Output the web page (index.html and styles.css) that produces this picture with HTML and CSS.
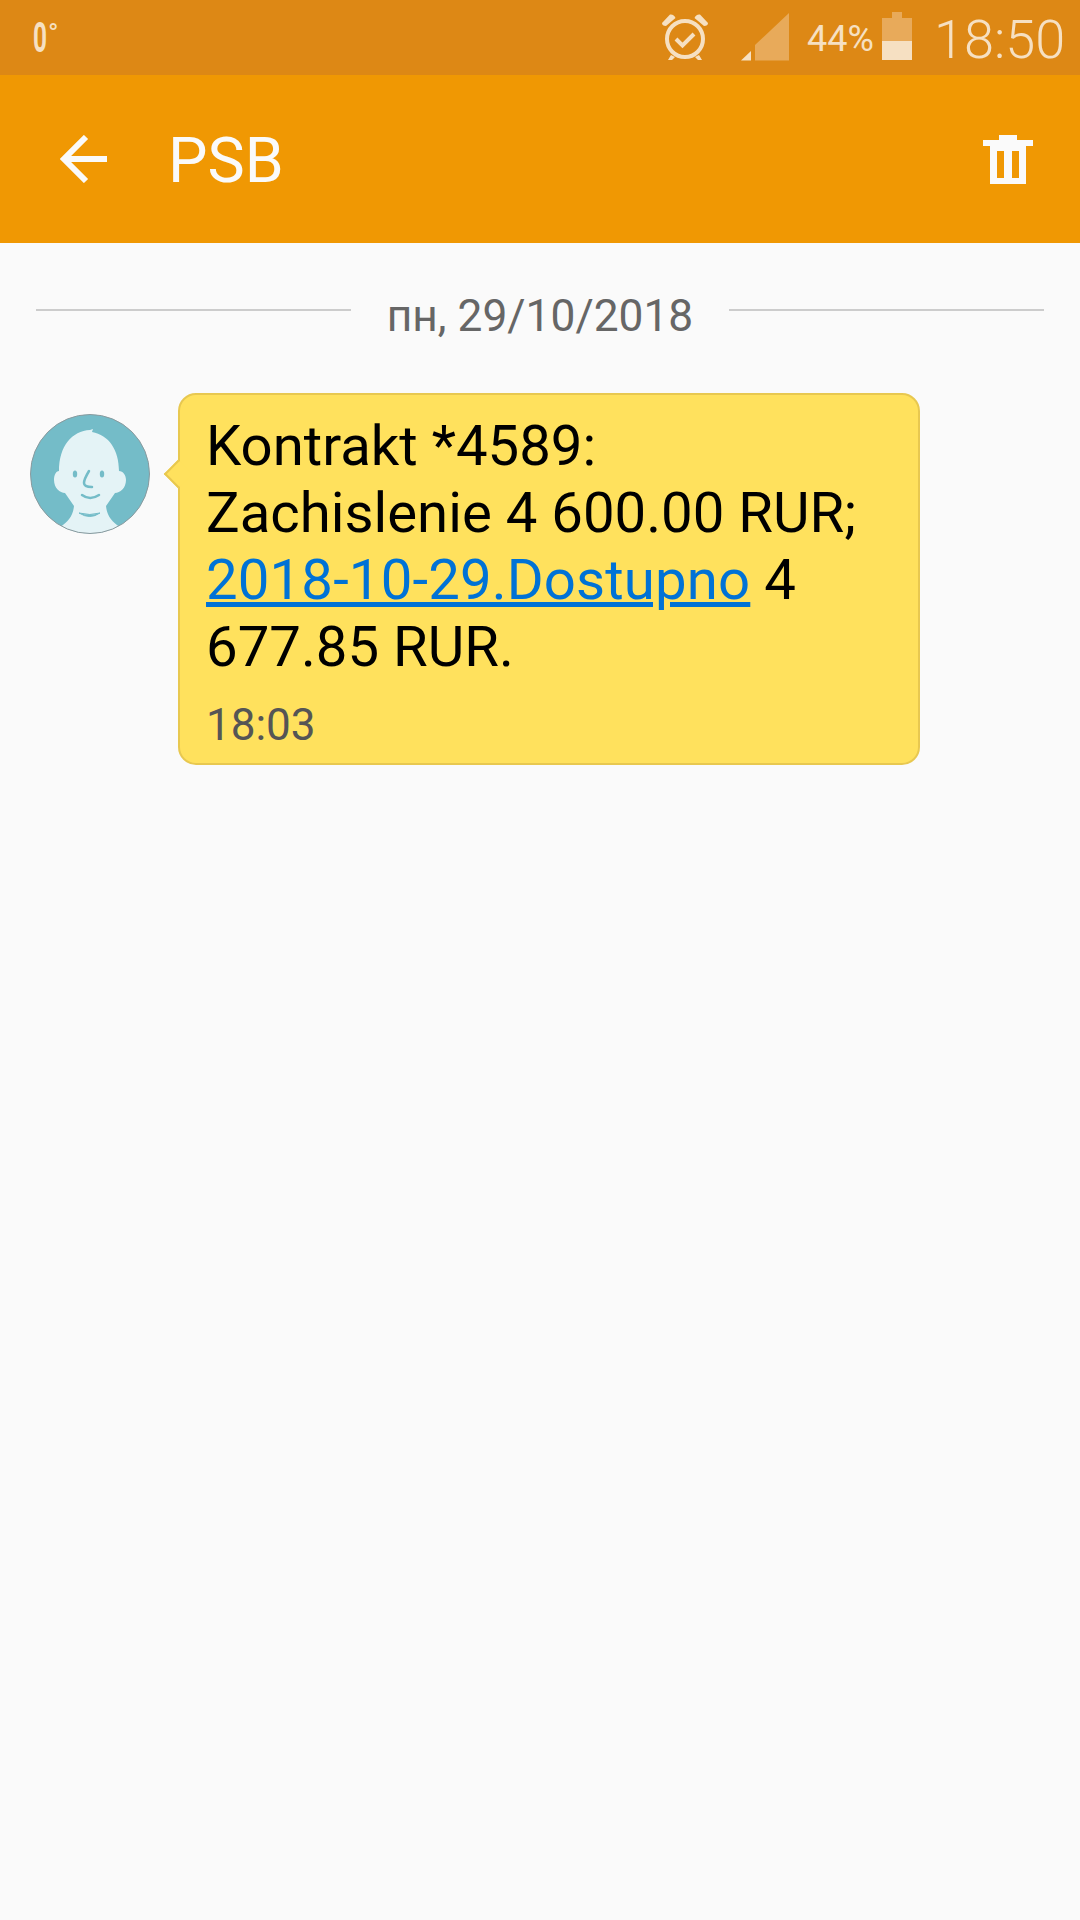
FILE: index.html
```html
<!DOCTYPE html>
<html lang="en">
<head>
    <meta charset="UTF-8">
    <meta name="viewport" content="width=device-width, initial-scale=1.0">
    <title>PSB</title>
    <link rel="stylesheet" href="styles.css">
</head>
<body>
    <div class="status-bar">
        <div class="temp"><span class="temp-num">0</span><span class="temp-deg">°</span></div>
        <svg class="alarm" width="48" height="48" viewBox="0 0 48 48">
            <circle cx="24" cy="26" r="18" fill="none" stroke="#f6e0c2" stroke-width="4"/>
            <path d="M15 26l6.500 6.500L33 21" fill="none" stroke="#f6e0c2" stroke-width="4"/>
            <path d="M1 10L9 1.500Q13 1 14.500 5L5 13Q1 13 1 10zM47 10L39 1.500Q35 1 33.500 5L43 13Q47 13 47 10z" fill="#f6e0c2"/>
            <path d="M10 42l-3 5h4l3-3zM38 42l3 5h-4l-3-3z" fill="#f6e0c2"/>
        </svg>
        <svg class="signal" width="48" height="48" viewBox="0 0 48 48">
            <path d="M0 47.500L10 38V47.500z" fill="#f6e0c2"/>
            <path d="M14 32L48 0V47.500H14z" fill="#e8aa5a"/>
        </svg>
        <span class="battery-text">44%</span>
        <div class="battery">
            <div class="battery-nub"></div>
            <div class="battery-empty"></div>
            <div class="battery-full"></div>
        </div>
        <span class="clock">18:50</span>
    </div>

    <div class="toolbar">
        <svg class="back" width="48" height="48" viewBox="0 0 48 48">
            <path d="M47 24H4M26 2L4 24l22 22" fill="none" stroke="#fafafa" stroke-width="6"/>
        </svg>
        <h1 class="title">PSB</h1>
        <svg class="trash" width="50" height="49" viewBox="0 0 50 49">
            <path d="M16 0h18v5h16v6h-7v38H7V11H0V5h16z" fill="#fafafa"/>
            <path d="M14 16h7v27h-7zM29 16h7v27h-7z" fill="#f09803"/>
        </svg>
    </div>

    <div class="date-row">
        <div class="date-line"></div>
        <span class="date-text">пн, 29/10/2018</span>
        <div class="date-line"></div>
    </div>

    <div class="message">
        <svg class="avatar" width="120" height="120" viewBox="0 0 120 120">
            <defs>
                <clipPath id="avatarClip"><circle cx="60" cy="60" r="59.500"/></clipPath>
            </defs>
            <circle cx="60" cy="60" r="59.500" fill="#74bcc8"/>
            <g clip-path="url(#avatarClip)" fill="#e4f3f6">
                <path d="M29 57C29 32 42 17 60 16L63 15L62 18C79 21 89 36 89 57C93 57 96 61 96 66C96 74 90 79 85 79L76 92C77 102 82 108 90 113L60 125L30 113C38 108 43 102 44 92L35 79C30 79 24 74 24 66C24 61 26 57 29 57z"/>
            </g>
            <g fill="none" stroke="#74bcc8" stroke-width="2.500" stroke-linecap="round">
                <path d="M59 57C56 62 54 66 54 69C54 73 59 73 62 73"/>
                <path d="M52 81Q60 87 69 81"/>
            </g>
            <path d="M49 99Q60 106 70 99Q60 102 49 99z" fill="#74bcc8" stroke="#74bcc8"/>
            <ellipse cx="45" cy="60" rx="2.200" ry="3.500" fill="#74bcc8"/>
            <ellipse cx="72" cy="60" rx="2.200" ry="3.500" fill="#74bcc8"/>
            <circle cx="60" cy="60" r="59.500" fill="none" stroke="#8a9a9e" stroke-width="1"/>
        </svg>
        <div class="bubble">
            <div class="bubble-tail"></div>
            <p class="bubble-text">Kontrakt *4589:<br>Zachislenie 4 600.00 RUR;<br><a class="link" href="#">2018-10-29.Dostupno</a> 4 677.85 RUR.</p>
            <div class="bubble-time">18:03</div>
        </div>
    </div>
</body>
</html>
```

FILE: styles.css
```css
body {
    font-family: Roboto, sans-serif;
    margin: 0;
    padding: 0;
    width: 1080px;
    height: 1920px;
    background-color: #fafafa;
    overflow: hidden;
}
.status-bar {
    height: 75px;
    background-color: #dd8815;
    display: flex;
    align-items: flex-start;
    color: #f6e0c2;
}
.temp {
    margin: 22px 0 0 33px;
    width: 24px;
    height: 32px;
    display: flex;
}
.temp-num {
    font-size: 42px;
    font-weight: 700;
    line-height: 32px;
    width: 13px;
    transform: scaleX(0.58);
    transform-origin: left top;
}
.temp-deg {
    font-size: 28px;
    line-height: 24px;
    margin-left: 2px;
}
.alarm {
    margin: 13px 0 0 604px;
}
.signal {
    margin: 13px 0 0 32px;
}
.battery-text {
    font-size: 36px;
    line-height: 40px;
    margin: 19px 0 0 18px;
    width: 66px;
    white-space: nowrap;
}
.battery {
    width: 30px;
    margin: 12px 0 0 9px;
}
.battery-nub {
    width: 10px;
    height: 6px;
    margin: 0 auto;
    background-color: #e8aa5a;
}
.battery-empty {
    height: 23px;
    background-color: #e8aa5a;
}
.battery-full {
    height: 19px;
    background-color: #f6e0c2;
}
.clock {
    font-size: 54px;
    font-weight: 300;
    line-height: 60px;
    margin: 10px 0 0 22px;
}
.toolbar {
    height: 168px;
    background-color: #f09803;
    display: flex;
    align-items: center;
    color: #fafafa;
}
.back {
    margin: 0 0 0 60px;
}
.title {
    font-size: 62.6px;
    font-weight: 400;
    line-height: 80px;
    margin: 4px 0 0 60px;
    flex: 1;
}
.trash {
    margin: 0 47px 0 0;
}
.date-row {
    display: flex;
    align-items: flex-start;
    padding: 48px 36px 0;
    height: 50px;
}
.date-line {
    flex: 1;
    height: 2px;
    margin-top: 18px;
    background-color: #cccccc;
}
.date-text {
    font-size: 44.3px;
    line-height: 50px;
    color: #666666;
    margin: 0 36px;
}
.message {
    display: flex;
    align-items: flex-start;
    margin-top: 52px;
    padding-left: 30px;
}
.avatar {
    margin-top: 21px;
}
.bubble {
    position: relative;
    width: 742px;
    margin-left: 28px;
    box-sizing: border-box;
    padding: 18px 26px 11px;
    background-color: #ffe15d;
    border: 2px solid #e8c850;
    border-radius: 18px;
}
.bubble-tail {
    position: absolute;
    left: -12px;
    top: 69px;
    width: 20px;
    height: 20px;
    box-sizing: border-box;
    background-color: #ffe15d;
    border-left: 2px solid #e8c850;
    border-bottom: 2px solid #e8c850;
    transform: rotate(45deg);
}
.bubble-text {
    margin: 0;
    font-size: 56.3px;
    line-height: 67px;
    color: #000000;
}
.link {
    color: #0072d6;
    letter-spacing: 0.15px;
    text-decoration: underline;
}
.bubble-time {
    font-size: 44px;
    line-height: 54px;
    margin-top: 17px;
    color: #555555;
}
```
